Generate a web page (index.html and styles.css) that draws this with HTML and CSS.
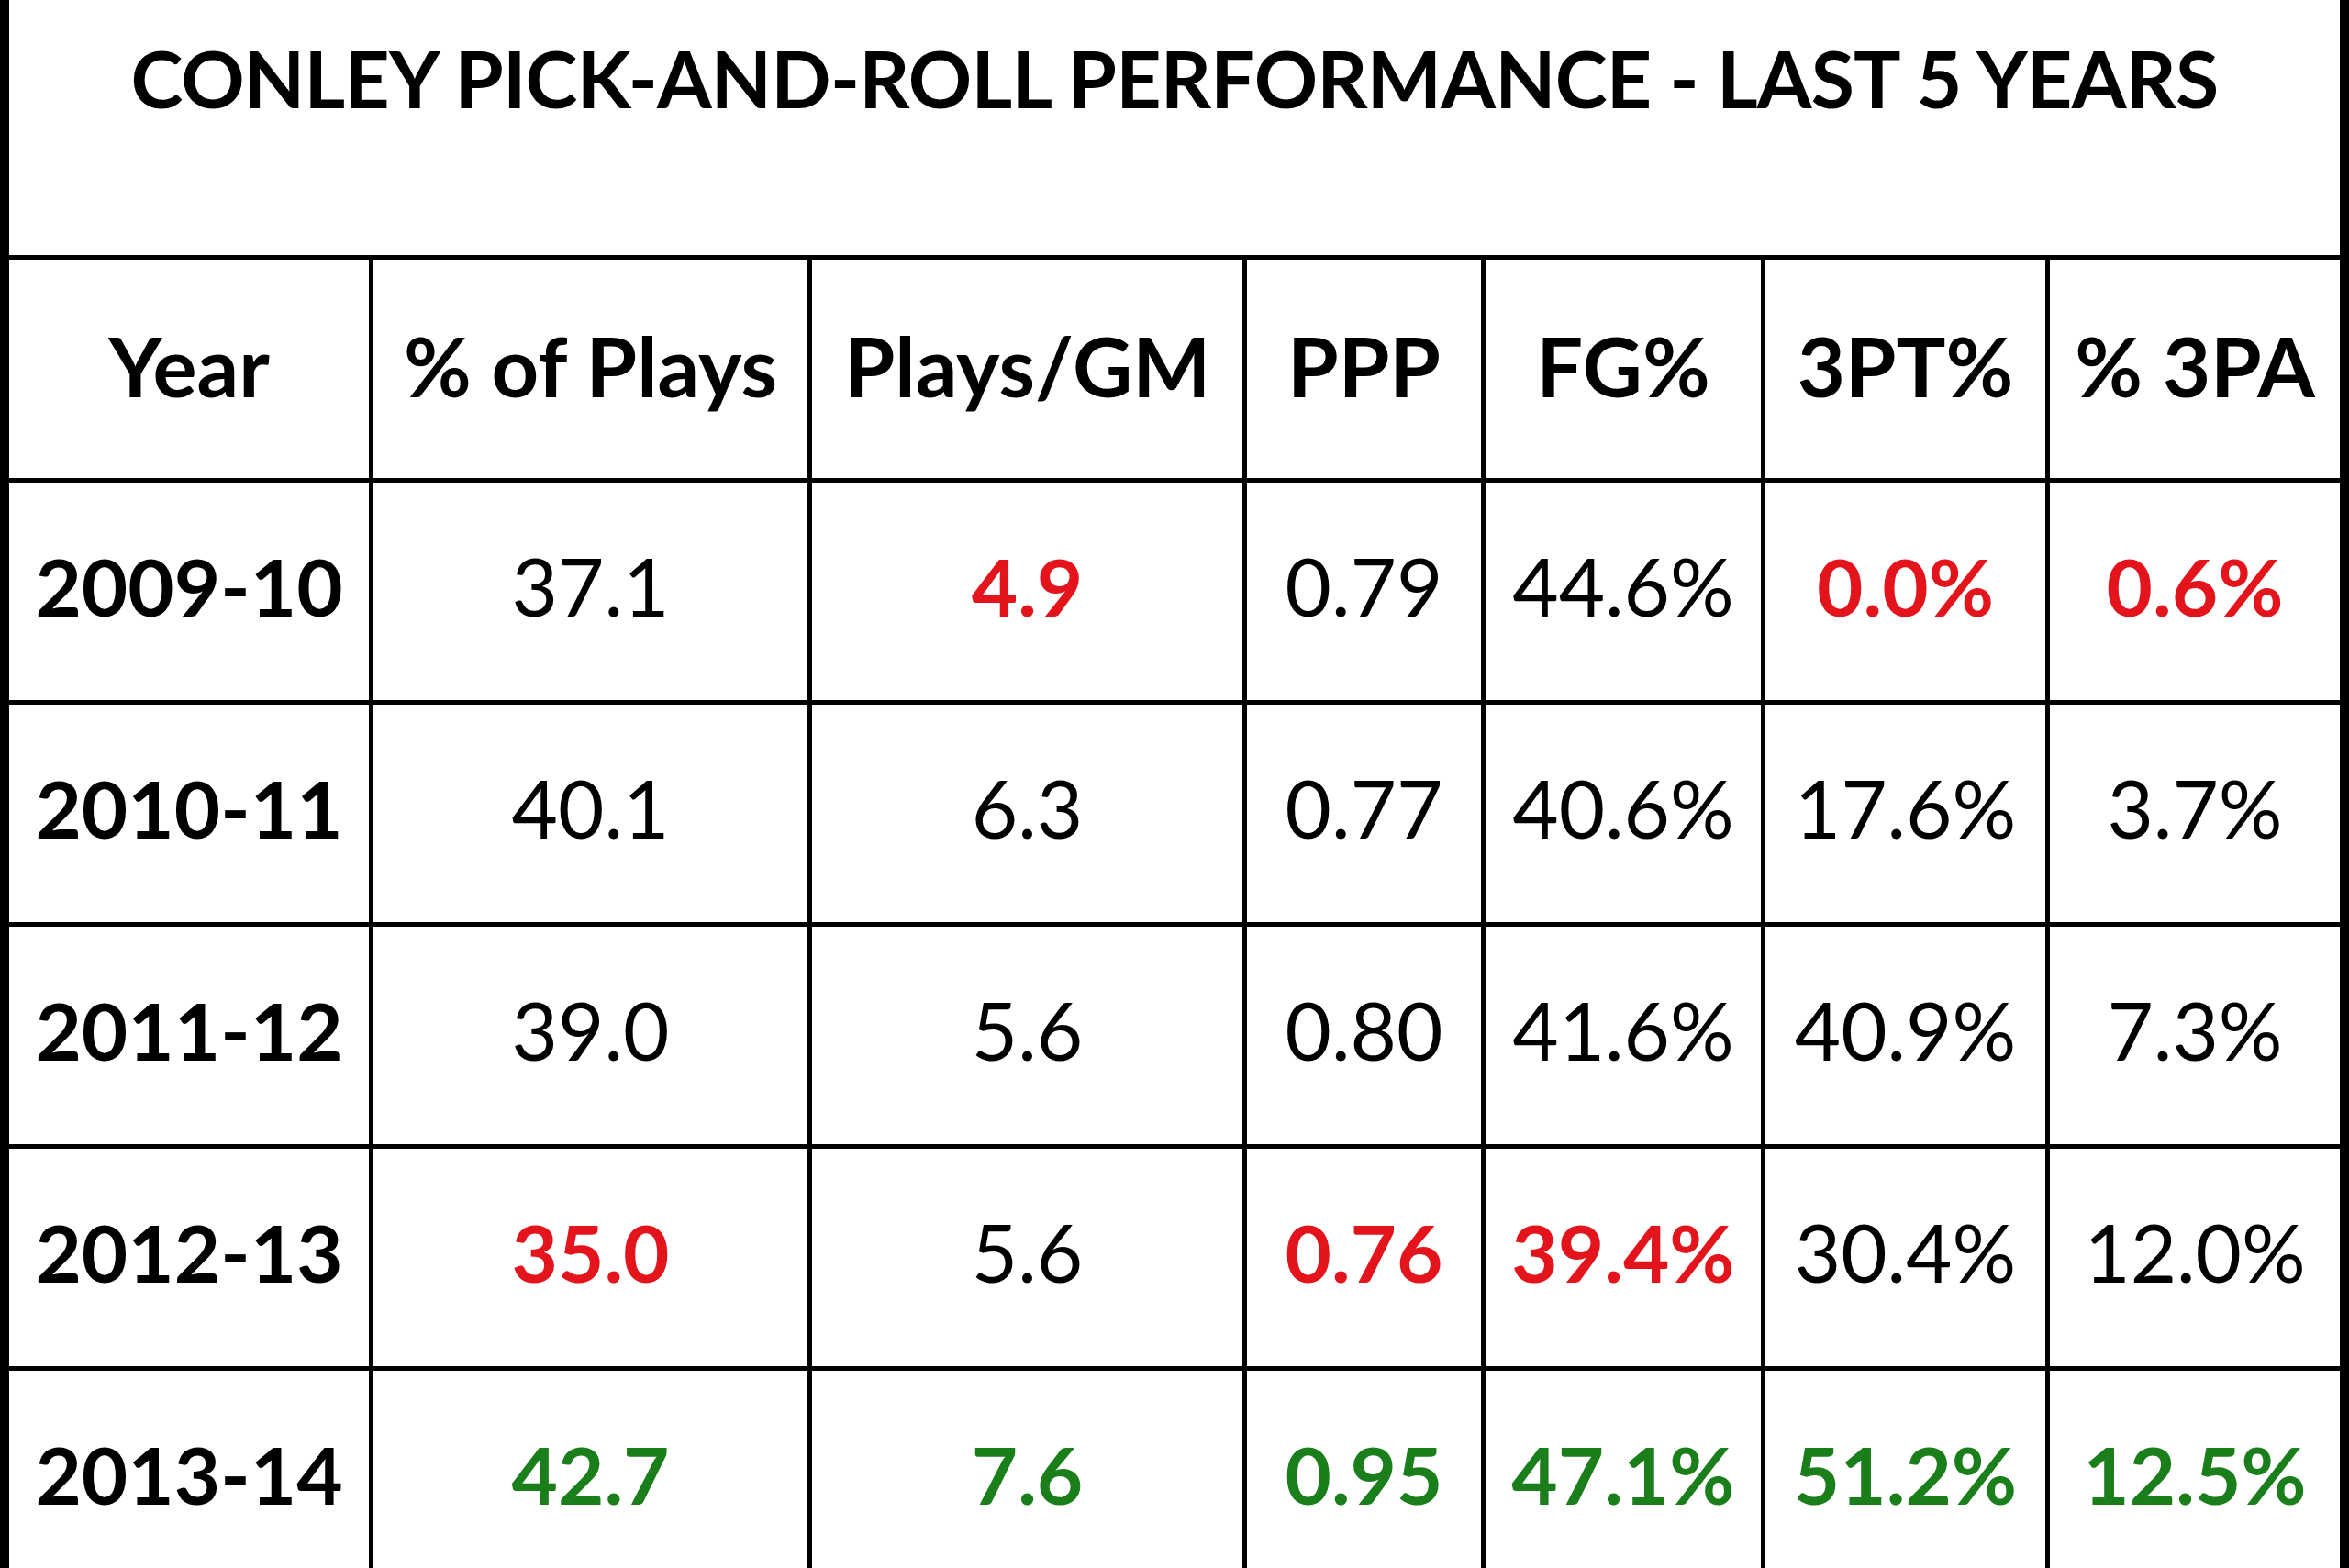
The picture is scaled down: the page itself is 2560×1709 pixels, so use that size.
FILE: index.html
```html
<!DOCTYPE html>
<html lang="en">
<head>
<meta charset="utf-8">
<title>Conley Pick-and-Roll Performance</title>
<link rel="stylesheet" href="styles.css">
</head>
<body>
<div class="sheet">
  <div class="title">CONLEY PICK-AND-ROLL PERFORMANCE - LAST 5 YEARS</div>

  <div class="cell hd">Year</div>
  <div class="cell hd">% of Plays</div>
  <div class="cell hd">Plays/GM</div>
  <div class="cell hd">PPP</div>
  <div class="cell hd">FG%</div>
  <div class="cell hd">3PT%</div>
  <div class="cell hd">% 3PA</div>

  <div class="cell yr">2009-10</div>
  <div class="cell">37.1</div>
  <div class="cell red">4.9</div>
  <div class="cell">0.79</div>
  <div class="cell">44.6%</div>
  <div class="cell red">0.0%</div>
  <div class="cell red">0.6%</div>

  <div class="cell yr">2010-11</div>
  <div class="cell">40.1</div>
  <div class="cell">6.3</div>
  <div class="cell">0.77</div>
  <div class="cell">40.6%</div>
  <div class="cell">17.6%</div>
  <div class="cell">3.7%</div>

  <div class="cell yr">2011-12</div>
  <div class="cell">39.0</div>
  <div class="cell">5.6</div>
  <div class="cell">0.80</div>
  <div class="cell">41.6%</div>
  <div class="cell">40.9%</div>
  <div class="cell">7.3%</div>

  <div class="cell yr">2012-13</div>
  <div class="cell red">35.0</div>
  <div class="cell">5.6</div>
  <div class="cell red">0.76</div>
  <div class="cell red">39.4%</div>
  <div class="cell">30.4%</div>
  <div class="cell">12.0%</div>

  <div class="cell yr">2013-14</div>
  <div class="cell green">42.7</div>
  <div class="cell green">7.6</div>
  <div class="cell green">0.95</div>
  <div class="cell green">47.1%</div>
  <div class="cell green">51.2%</div>
  <div class="cell green">12.5%</div>
</div>
</body>
</html>
```

FILE: styles.css
```css
html, body {
  margin: 0;
  padding: 0;
  background: #fff;
  overflow: hidden;
}

.sheet {
  width: 2560px;
  height: 1709px;
  box-sizing: border-box;
  padding: 0 10px;
  background: #000;
  display: grid;
  grid-template-columns: 392px 473px 469px 255px 300px 305px 316px;
  grid-template-rows: 278px 238px 237px 237px 237px 237px 237px;
  gap: 5px;
  font-family: Lato, "Open Sans", "Liberation Sans", sans-serif;
  color: #000;
  overflow: hidden;
}

.title {
  grid-column: 1 / -1;
  background: #fff;
  text-align: center;
  font-weight: 700;
  font-size: 86px;
  letter-spacing: -0.8px;
  line-height: 1;
  padding-top: 42px;
  box-sizing: border-box;
  white-space: nowrap;
}

.cell {
  background: #fff;
  display: flex;
  align-items: center;
  justify-content: center;
  box-sizing: border-box;
  padding-bottom: 12px;
  font-size: 87px;
  line-height: 1;
  font-weight: 400;
  white-space: nowrap;
}

.hd {
  font-weight: 700;
  font-size: 90px;
  padding-bottom: 8px;
}

.yr {
  font-weight: 700;
}

.red {
  color: #e3141c;
  font-weight: 700;
}

.green {
  color: #1a7e1a;
  font-weight: 700;
}
```
